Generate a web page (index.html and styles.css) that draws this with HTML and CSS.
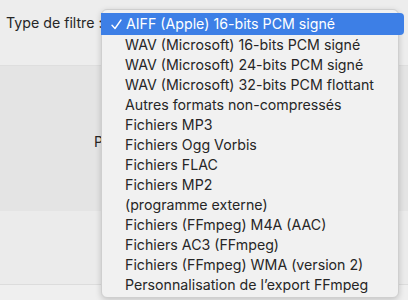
FILE: index.html
```html
<!DOCTYPE html>
<html lang="fr">
<head>
  <meta charset="UTF-8">
  <title>Exporter l'audio</title>
  <link rel="stylesheet" href="styles.css">
</head>
<body>
  <div class="toolbar">
    <label class="field-label">Type de filtre :</label>
  </div>
  <div class="band">
    <span class="band-label">P</span>
  </div>
  <div class="lower"></div>
  <div class="footer"></div>

  <ul class="menu">
    <li class="item selected">
      <svg class="check" width="11" height="11" viewBox="0 0 11 11"><path d="M1 6.2 L4 9.5 L10 1" fill="none" stroke="#fff" stroke-width="1.4" stroke-linecap="round" stroke-linejoin="round"/></svg>AIFF (Apple) 16-bits PCM signé
    </li>
    <li class="item">WAV (Microsoft) 16-bits PCM signé</li>
    <li class="item">WAV (Microsoft) 24-bits PCM signé</li>
    <li class="item">WAV (Microsoft) 32-bits PCM flottant</li>
    <li class="item">Autres formats non-compressés</li>
    <li class="item">Fichiers MP3</li>
    <li class="item">Fichiers Ogg Vorbis</li>
    <li class="item">Fichiers FLAC</li>
    <li class="item">Fichiers MP2</li>
    <li class="item">(programme externe)</li>
    <li class="item">Fichiers (FFmpeg) M4A (AAC)</li>
    <li class="item">Fichiers AC3 (FFmpeg)</li>
    <li class="item">Fichiers (FFmpeg) WMA (version 2)</li>
    <li class="item">Personnalisation de l’export FFmpeg</li>
  </ul>
</body>
</html>
```

FILE: styles.css
```css
body {
  margin: 0;
  background: #ececec;
  font-family: Inter, "Liberation Sans", Arial, sans-serif;
  font-size: 14.2px;
  color: #262626;
  overflow: hidden;
}
.toolbar {
  height: 66px;
  padding: 14px 0 0 6px;
  box-sizing: border-box;
  border-bottom: 1px solid #dedede;
  background: #ededed;
}
.field-label {
  line-height: 18px;
}
.band {
  height: 145px;
  background: #e4e4e4;
  padding: 67px 0 0 94px;
  box-sizing: border-box;
}
.band-label {
  line-height: 18px;
}
.lower {
  height: 73px;
  background: #ebebeb;
  border-bottom: 1px solid #dcdcdc;
}
.footer {
  height: 20px;
  background: #efefef;
}
.menu {
  position: absolute;
  left: 101px;
  top: 9px;
  width: 298px;
  height: 289px;
  margin: 0;
  padding: 3px 0 5px;
  box-sizing: border-box;
  list-style: none;
  background: #f1f1f1;
  border: 1px solid #cfcfcf;
  border-radius: 6px;
  box-shadow: 0 2px 6px rgba(0, 0, 0, 0.18);
}
.item {
  height: 20px;
  line-height: 20px;
  padding-left: 23px;
  white-space: nowrap;
}
.selected {
  position: relative;
  height: 22px;
  line-height: 22px;
  margin-left: -1px;
  margin-right: -6px;
  padding-left: 10px;
  background: #3d7fe6;
  color: #ffffff;
  border-radius: 0 4px 4px 0;
}
.check {
  margin-right: 4px;
  vertical-align: -1px;
}
```
